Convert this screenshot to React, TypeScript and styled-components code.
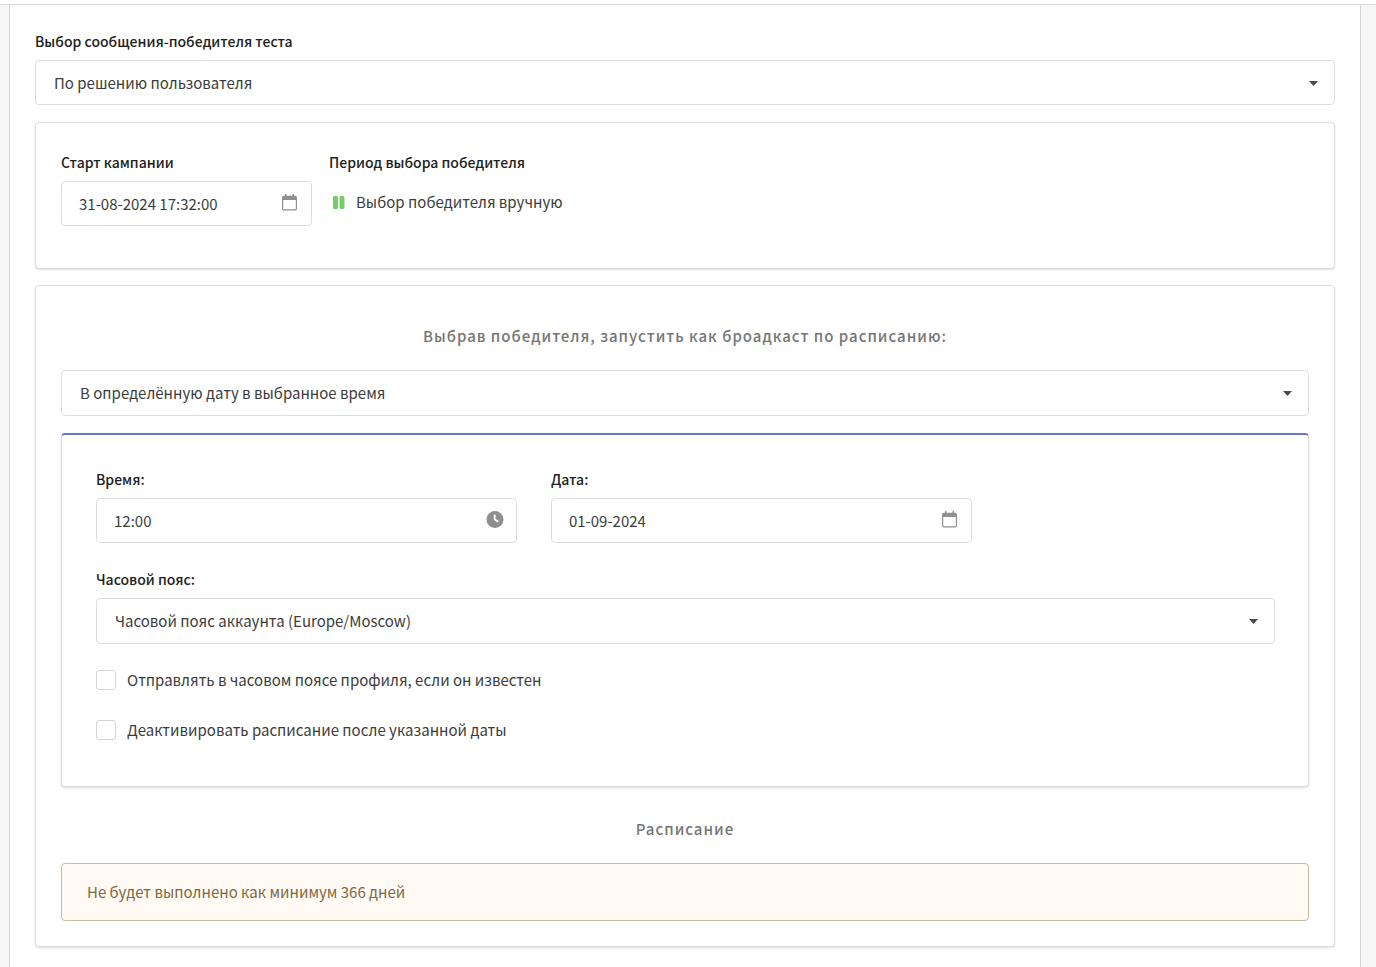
import React from 'react';
import styled, { createGlobalStyle } from 'styled-components';

const GlobalStyle = createGlobalStyle`
  *, *::before, *::after { box-sizing: border-box; }
  body {
    margin: 0;
    background: #f6f6f6;
    color: #3c3c3c;
    font-family: "Noto Sans CJK SC", "Noto Sans", sans-serif;
    font-size: 15px;
    line-height: 20px;
  }
`;

const Page = styled.div`
  display: flex;
  flex-direction: column;
  min-height: 100vh;
`;

const TopBar = styled.header`
  height: 5px;
  background: #ffffff;
  border-bottom: 1px solid #d9d9da;
`;

const Content = styled.main`
  flex: 1;
  margin: 0 15px 0 9px;
  padding: 26px 25px 20px;
  background: #ffffff;
  border: solid #d4d4d5;
  border-width: 0 1px;
`;

const Card = styled.section`
  border: 1px solid #dcddde;
  border-radius: 4px;
  background: #ffffff;
  box-shadow: 0 1px 2px rgba(34, 36, 38, 0.15);
`;

const StartCard = styled(Card)`
  display: flex;
  gap: 17px;
  margin-top: 17px;
  padding: 29px 25px 42px;
`;

const BroadcastCard = styled(Card)`
  margin-top: 16px;
  padding: 25px;
`;

const ScheduleCard = styled(Card)`
  margin-top: 17px;
  padding: 34px 33px 46px 34px;
  border-top: 2px solid #6574cd;
`;

const Field = styled.div<{ $width?: string; $span?: number }>`
  width: ${p => p.$width ?? 'auto'};
  grid-column: ${p => (p.$span ? `span ${p.$span}` : 'auto')};
`;

const Label = styled.label`
  display: block;
  margin-bottom: 9px;
  color: #212121;
  font-size: 14px;
  font-weight: 500;
`;

const Caption = styled(Label).attrs({ as: 'div' })``;

const Control = styled.div`
  position: relative;
`;

const TextInput = styled.input`
  display: block;
  width: 100%;
  height: 45px;
  padding: 0 44px 0 17px;
  border: 1px solid #dededf;
  border-radius: 4px;
  background: #ffffff;
  color: #3c3c3c;
  font: inherit;
`;

const ControlIcon = styled.svg`
  position: absolute;
  top: 12px;
  right: 12px;
  width: 20px;
  height: 20px;
  color: #8f8f8f;
  pointer-events: none;
`;

const SelectInput = styled.select<{ $height: number }>`
  display: block;
  width: 100%;
  height: ${p => p.$height}px;
  padding: 0 44px 0 18px;
  appearance: none;
  border: 1px solid #dededf;
  border-radius: 4px;
  background: #ffffff;
  color: #3c3c3c;
  font: inherit;
`;

const Caret = styled.svg`
  position: absolute;
  top: 21px;
  right: 17px;
  width: 9px;
  height: 5px;
  fill: #4a4a4a;
  pointer-events: none;
`;

const Manual = styled.div`
  display: flex;
  align-items: center;
  gap: 11px;
  height: 42px;
  padding-left: 4px;
`;

const Heading = styled.h2<{ $top: number }>`
  margin: ${p => p.$top}px 0 24px;
  color: #767676;
  font-size: 15px;
  font-weight: 500;
  line-height: 20px;
  letter-spacing: 1px;
  text-align: center;
`;

const FieldGrid = styled.div`
  display: grid;
  grid-template-columns: repeat(16, 1fr);
  column-gap: 34px;
  margin-bottom: 26px;
`;

const Checks = styled.div`
  display: flex;
  flex-direction: column;
  gap: 30px;
  margin-top: 26px;
`;

const CheckLabel = styled.label`
  display: flex;
  align-items: center;
  gap: 11px;
`;

const CheckBox = styled.input`
  appearance: none;
  width: 20px;
  height: 20px;
  margin: 0;
  border: 1px solid #d4d4d5;
  border-radius: 3px;
  background: #ffffff;

  &:checked { background: #6574cd; }
`;

const Notice = styled.p`
  margin: 0;
  padding: 18px 25px;
  border: 1px solid #c9ba9b;
  border-radius: 4px;
  background: #fffaf3;
  color: #7f683e;
`;

const CalendarIcon = () => (
  <ControlIcon viewBox="0 0 20 20" aria-hidden="true">
    <path
      fill="currentColor"
      fillRule="evenodd"
      d="M5 1h1.500v1.800h6V1H14v1.800h1.300a1.700 1.700 0 0 1 1.700 1.700v11.300a1.700 1.700 0 0 1-1.700 1.700H3.700A1.700 1.700 0 0 1 2 15.800V4.500a1.700 1.700 0 0 1 1.700-1.700H5zM3.200 7v8.700a.6.6 0 0 0 .6.6h11.400a.6.6 0 0 0 .6-.6V7z"
    />
  </ControlIcon>
);

const ClockIcon = () => (
  <ControlIcon viewBox="0 0 20 20" aria-hidden="true">
    <circle cx="10" cy="9.500" r="8.500" fill="currentColor" />
    <path d="M9.700 4.500v4.800l3.500 2.500" fill="none" stroke="#ffffff" strokeWidth="1.800" />
  </ControlIcon>
);

const PauseIcon = () => (
  <svg width="12" height="13" viewBox="0 0 12 13" fill="#74cd68" aria-hidden="true">
    <rect width="5" height="13" rx="1.500" />
    <rect x="6.500" width="5" height="13" rx="1.500" />
  </svg>
);

interface SelectProps {
  id?: string;
  label?: string;
  option: string;
  height?: number;
}

const Select = ({ id, label, option, height = 46 }: SelectProps) => (
  <Control>
    <SelectInput id={id} aria-label={label} $height={height}>
      <option>{option}</option>
    </SelectInput>
    <Caret viewBox="0 0 9 5" aria-hidden="true">
      <path d="M0 0h9L4.500 5z" />
    </Caret>
  </Control>
);

export default function App() {
  return (
    <>
      <GlobalStyle />
      <Page>
        <TopBar />
        <Content>
          <Label htmlFor="winner">Выбор сообщения-победителя теста</Label>
          <Select id="winner" option="По решению пользователя" height={45} />

          <StartCard>
            <Field $width="251px">
              <Label htmlFor="start">Старт кампании</Label>
              <Control>
                <TextInput id="start" defaultValue="31-08-2024 17:32:00" />
                <CalendarIcon />
              </Control>
            </Field>
            <Field>
              <Caption>Период выбора победителя</Caption>
              <Manual>
                <PauseIcon />
                <span>Выбор победителя вручную</span>
              </Manual>
            </Field>
          </StartCard>

          <BroadcastCard>
            <Heading $top={15}>Выбрав победителя, запустить как броадкаст по расписанию:</Heading>
            <Select label="Расписание запуска" option="В определённую дату в выбранное время" />

            <ScheduleCard>
              <FieldGrid>
                <Field $span={6}>
                  <Label htmlFor="time">Время:</Label>
                  <Control>
                    <TextInput id="time" defaultValue="12:00" />
                    <ClockIcon />
                  </Control>
                </Field>
                <Field $span={6}>
                  <Label htmlFor="date">Дата:</Label>
                  <Control>
                    <TextInput id="date" defaultValue="01-09-2024" />
                    <CalendarIcon />
                  </Control>
                </Field>
              </FieldGrid>

              <Label htmlFor="zone">Часовой пояс:</Label>
              <Select id="zone" option="Часовой пояс аккаунта (Europe/Moscow)" />

              <Checks>
                <CheckLabel>
                  <CheckBox type="checkbox" />
                  Отправлять в часовом поясе профиля, если он известен
                </CheckLabel>
                <CheckLabel>
                  <CheckBox type="checkbox" />
                  Деактивировать расписание после указанной даты
                </CheckLabel>
              </Checks>
            </ScheduleCard>

            <Heading $top={32}>Расписание</Heading>
            <Notice>Не будет выполнено как минимум 366 дней</Notice>
          </BroadcastCard>
        </Content>
      </Page>
    </>
  );
}
